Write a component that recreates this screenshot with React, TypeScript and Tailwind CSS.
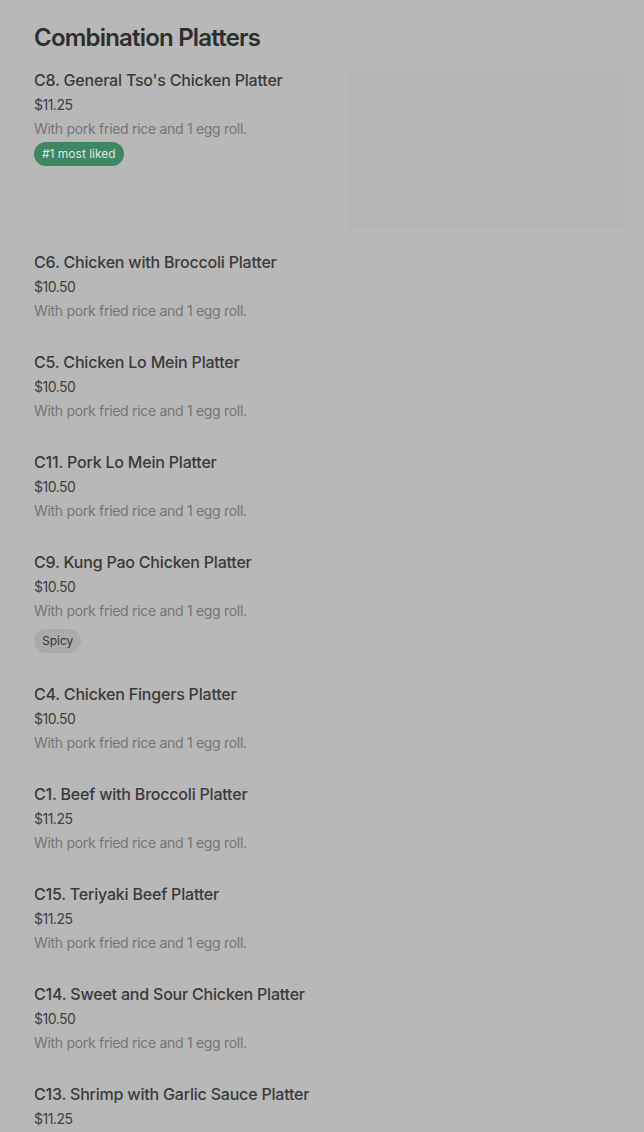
const DESC = "With pork fried rice and 1 egg roll.";

interface Item {
  name: string;
  price: string;
  badge?: "liked" | "spicy";
  image?: boolean;
}

const items: Item[] = [
  { name: "C8. General Tso's Chicken Platter", price: "$11.25", badge: "liked", image: true },
  { name: "C6. Chicken with Broccoli Platter", price: "$10.50" },
  { name: "C5. Chicken Lo Mein Platter", price: "$10.50" },
  { name: "C11. Pork Lo Mein Platter", price: "$10.50" },
  { name: "C9. Kung Pao Chicken Platter", price: "$10.50", badge: "spicy" },
  { name: "C4. Chicken Fingers Platter", price: "$10.50" },
  { name: "C1. Beef with Broccoli Platter", price: "$11.25" },
  { name: "C15. Teriyaki Beef Platter", price: "$11.25" },
  { name: "C14. Sweet and Sour Chicken Platter", price: "$10.50" },
  { name: "C13. Shrimp with Garlic Sauce Platter", price: "$11.25" },
];

function MenuRow({ item }: { item: Item }) {
  return (
    <div className="flex items-start">
      <div className="flex-1 pb-[29px]">
        <div className="text-[16px] leading-6 font-medium text-[#3a3a3a] tracking-[-0.2px]">
          {item.name}
        </div>
        <div className="mt-[3px] text-[14px] leading-5 text-[#404040] tracking-[-0.5px]">
          {item.price}
        </div>
        <div className="mt-1 text-[14px] leading-5 text-[#757575] tracking-[-0.3px]">
          {DESC}
        </div>
        {item.badge === "liked" && (
          <div className="mt-[3px] inline-flex h-6 items-center rounded-full bg-[#3f8662] px-2 text-[12px] text-[#dce8e0]">
            #1 most liked
          </div>
        )}
        {item.badge === "spicy" && (
          <div className="mt-2 inline-flex h-6 items-center rounded-full bg-[#ababab] px-2 text-[12px] text-[#333]">
            Spicy
          </div>
        )}
      </div>
      {item.image && (
        <div className="mt-1 mb-[22px] h-[156px] w-[276px] shrink-0 bg-[#b4b4b4]" />
      )}
    </div>
  );
}

export default function App() {
  return (
    <div
      className="min-h-screen bg-[#b8b8b8] pl-[34px] pr-5"
      style={{ fontFamily: "Inter, 'Noto Sans', sans-serif" }}
    >
      <h2 className="pt-[22px] pb-[14px] text-[24px] leading-8 font-semibold text-[#2e2e2e] tracking-[-0.8px]">
        Combination Platters
      </h2>
      <div className="flex flex-col">
        {items.map((it) => (
          <MenuRow key={it.name} item={it} />
        ))}
      </div>
    </div>
  );
}
